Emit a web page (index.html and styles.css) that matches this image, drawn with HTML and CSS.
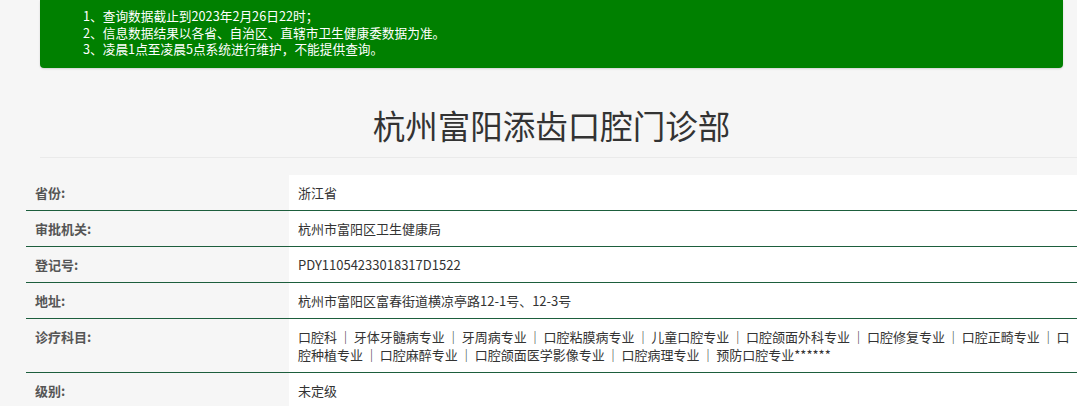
FILE: index.html
```html
<!DOCTYPE html>
<html lang="zh-CN">
<head>
<meta charset="utf-8">
<title>杭州富阳添齿口腔门诊部</title>
<link rel="stylesheet" href="styles.css">
</head>
<body>
<div class="notice">
  <p>1、查询数据截止到2023年2月26日22时；</p>
  <p>2、信息数据结果以各省、自治区、直辖市卫生健康委数据为准。</p>
  <p>3、凌晨1点至凌晨5点系统进行维护，不能提供查询。</p>
</div>
<div class="main">
  <h1 class="title">杭州富阳添齿口腔门诊部</h1>
  <hr class="rule">
  <div class="info">
    <div class="row"><div class="label">省份:</div><div class="value">浙江省</div></div>
    <div class="row"><div class="label">审批机关:</div><div class="value">杭州市富阳区卫生健康局</div></div>
    <div class="row"><div class="label">登记号:</div><div class="value">PDY11054233018317D1522</div></div>
    <div class="row"><div class="label">地址:</div><div class="value">杭州市富阳区富春街道横凉亭路12-1号、12-3号</div></div>
    <div class="row"><div class="label">诊疗科目:</div><div class="value list">口腔科 ｜ 牙体牙髓病专业 ｜ 牙周病专业 ｜ 口腔粘膜病专业 ｜ 儿童口腔专业 ｜ 口腔颌面外科专业 ｜ 口腔修复专业 ｜ 口腔正畸专业 ｜ 口腔种植专业 ｜ 口腔麻醉专业 ｜ 口腔颌面医学影像专业 ｜ 口腔病理专业 ｜ 预防口腔专业******</div></div>
    <div class="row"><div class="label">级别:</div><div class="value">未定级</div></div>
  </div>
</div>
</body>
</html>
```
FILE: styles.css
```css
html, body {
  margin: 0;
  padding: 0;
  background: #f6f6f6;
  font-family: "Noto Sans CJK SC", "Noto Sans", sans-serif;
  color: #333;
}
.notice {
  margin: 0 14px 0 40px;
  height: 68px;
  box-sizing: border-box;
  padding: 8px 0 0 43px;
  background: #008000;
  color: #fff;
  border-radius: 0 0 4px 4px;
  box-shadow: 0 1px 2px rgba(0,0,0,0.15);
  font-size: 12.7px;
  line-height: 16.5px;
}
.notice p { margin: 0; }
.main {
  margin-left: 26px;
}
.title {
  margin: 0;
  padding-top: 37px;
  height: 40px;
  text-align: center;
  font-size: 32.5px;
  line-height: 40px;
  font-weight: 400;
  color: #333;
}
.rule {
  margin: 12px 0 17px 14px;
  border: 0;
  border-top: 1px solid #eaeaea;
  height: 0;
}
.info {
  font-size: 13px;
  line-height: 18px;
}
.row {
  display: grid;
  grid-template-columns: 263px 1fr;
  border-bottom: 1px solid #1d5e3d;
}
.label {
  padding: 9px 9px 8px;
  font-weight: 700;
  color: #555;
}
.value {
  padding: 9px 7px 8px 9px;
  background: #fff;
  color: #333;
}
.list {
  word-spacing: -1px;
}
```
